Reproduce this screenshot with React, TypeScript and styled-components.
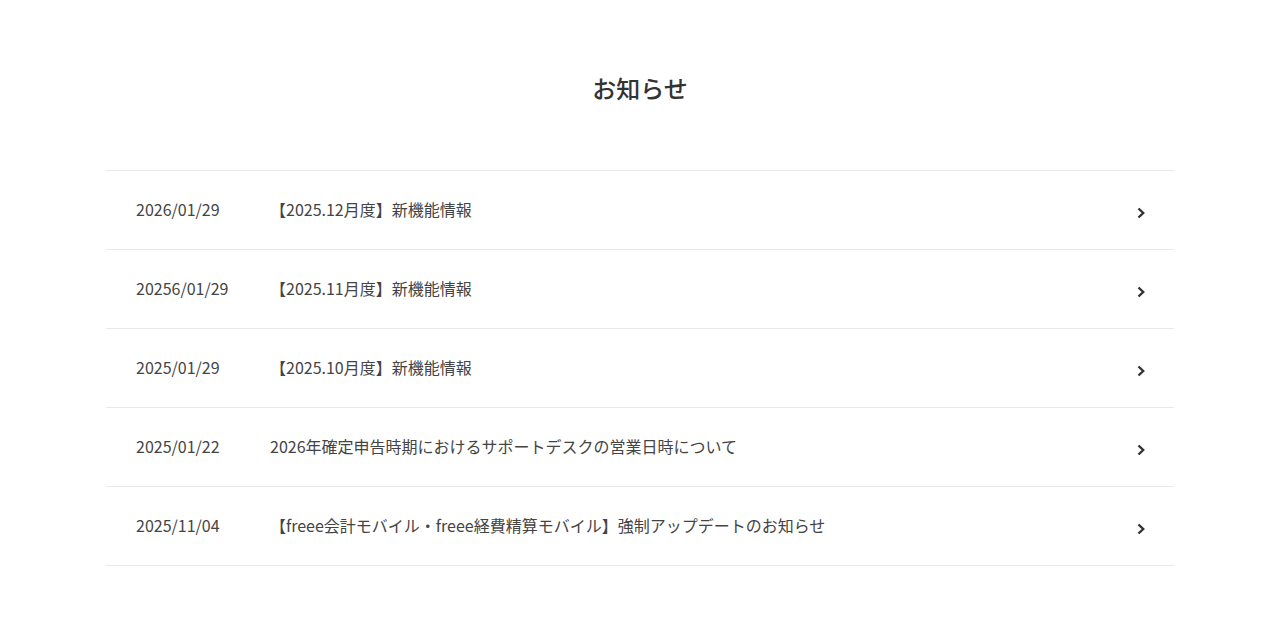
import React from 'react'
import styled, { createGlobalStyle } from 'styled-components'

const GlobalStyle = createGlobalStyle`
  html, body {
    margin: 0;
    padding: 0;
    background: #fff;
  }
  body {
    font-family: "Noto Sans CJK JP", "Noto Sans", sans-serif;
    color: #333;
  }
`

const Section = styled.section`
  width: 1068px;
  margin: 0 auto;
  padding: 72px 0 70px;
`

const Title = styled.h2`
  margin: 0 0 66px;
  text-align: center;
  font-size: 24px;
  font-weight: 500;
  line-height: 32px;
  color: #333;
`

const List = styled.ul`
  list-style: none;
  margin: 0;
  padding: 0;
  border-top: 1px solid #e8e8e8;
`

const Item = styled.li`
  border-bottom: 1px solid #e8e8e8;
`

const Link = styled.a`
  display: flex;
  align-items: center;
  height: 78px;
  padding: 0 28px 0 30px;
  color: #444;
  text-decoration: none;
  font-size: 16px;
  line-height: 24px;
  cursor: pointer;
`

const Date = styled.span`
  flex: 0 0 134px;
  margin-top: -2px;
`

const Headline = styled.span`
  flex: 1;
  margin-top: -2px;
`

const Chevron = styled.svg`
  flex: 0 0 10px;
  width: 10px;
  height: 12px;
  margin-top: 5px;
`

const news = [
  { date: '2026/01/29', title: '【2025.12月度】新機能情報' },
  { date: '20256/01/29', title: '【2025.11月度】新機能情報' },
  { date: '2025/01/29', title: '【2025.10月度】新機能情報' },
  { date: '2025/01/22', title: '2026年確定申告時期におけるサポートデスクの営業日時について' },
  { date: '2025/11/04', title: '【freee会計モバイル・freee経費精算モバイル】強制アップデートのお知らせ' },
]

const App: React.FC = () => {
  return (
    <>
      <GlobalStyle />
      <Section>
        <Title>お知らせ</Title>
        <List>
          {news.map((n) => (
            <Item key={n.date + n.title}>
              <Link>
                <Date>{n.date}</Date>
                <Headline>{n.title}</Headline>
                <Chevron viewBox="0 0 10 12">
                  <path d="M2.5 1.5 L7.2 6 L2.5 10.5" fill="none" stroke="#333" strokeWidth="2.4" />
                </Chevron>
              </Link>
            </Item>
          ))}
        </List>
      </Section>
    </>
  )
}

export default App
